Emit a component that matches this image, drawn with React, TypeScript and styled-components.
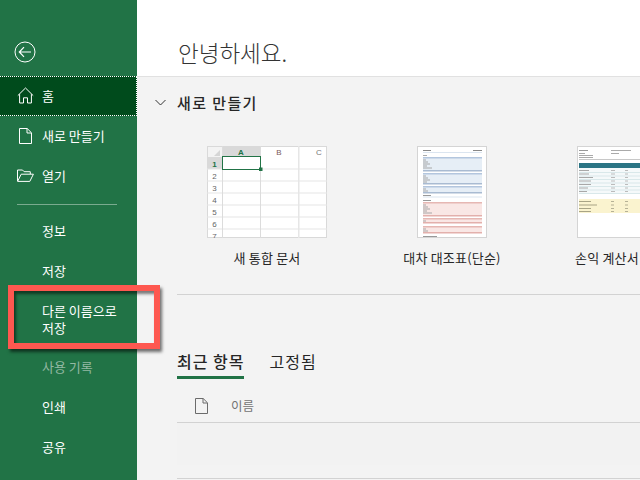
import React from "react";
import styled, { createGlobalStyle } from "styled-components";

const Global = createGlobalStyle`
  html, body { margin: 0; padding: 0; width: 640px; height: 480px; overflow: hidden; background: #f3f3f3; }
  body { font-family: "Noto Sans CJK KR", "Noto Sans", sans-serif; }
`;

const Page = styled.div`
  position: relative;
  display: flex;
  width: 640px;
  height: 480px;
  overflow: hidden;
`;

const Sidebar = styled.nav`
  flex: 0 0 137px;
  display: flex;
  flex-direction: column;
  background: #217346;
  color: #fff;
`;

const BackArea = styled.div`
  height: 76px;
  display: flex;
  align-items: flex-end;
  padding: 0 0 13px 14px;
  box-sizing: border-box;
`;

const NavItem = styled.div<{ $active?: boolean; $muted?: boolean }>`
  height: 40px;
  flex: none;
  box-sizing: border-box;
  display: flex;
  align-items: center;
  padding-bottom: 1px;
  font-size: 13px;
  color: ${(p) => (p.$muted ? "#93b8a3" : "#fff")};
  background: ${(p) => (p.$active ? "#004b1c" : "transparent")};
  border-style: dotted;
  border-color: #fff;
  border-width: ${(p) => (p.$active ? "1px 1px 1px 0" : "0")};
  white-space: nowrap;
`;

const IconSlot = styled.span`
  flex: 0 0 42px;
  display: flex;
  justify-content: center;
  padding-left: 8px;
  box-sizing: border-box;
`;

const TextItem = styled(NavItem)`
  padding-left: 42px;
`;

const TallItem = styled.div`
  height: 56px;
  flex: none;
  box-sizing: border-box;
  padding: 11px 0 0 42px;
  font-size: 13px;
  line-height: 17px;
  color: #fff;
  white-space: pre-line;
`;

const NavDivider = styled.hr`
  flex: none;
  width: 100px;
  margin: 8px 0 6px 17px;
  border: 0;
  height: 1px;
  background: #7aab8f;
`;

const Main = styled.main`
  flex: 1;
  display: flex;
  flex-direction: column;
  min-width: 0;
`;

const Header = styled.header`
  height: 77px;
  flex: none;
  box-sizing: border-box;
  background: #fff;
  border-bottom: 1px solid #e1e1e1;
  padding: 35px 0 0 41px;
  font-size: 22.5px;
  line-height: 34px;
  font-weight: 300;
  color: #333;
`;

const Body = styled.div`
  flex: 1;
  padding-left: 40px;
  background: #f3f3f3;
`;

const SectionTitle = styled.div`
  height: 51px;
  display: flex;
  align-items: center;
  margin-left: -22px;
  gap: 11px;
  font-size: 15px;
  letter-spacing: 1.4px;
  font-weight: 500;
  color: #262626;
`;

const Tiles = styled.div`
  display: flex;
  gap: 5px;
  margin-top: 18px;
  height: 148px;
  border-bottom: 1px solid #d2d2d2;
`;

const Tile = styled.div<{ $w: number }>`
  flex: 0 0 ${(p) => p.$w}px;
  display: flex;
  flex-direction: column;
  align-items: center;
`;

const Thumb = styled.div<{ $w: number; $offset?: number }>`
  width: ${(p) => p.$w}px;
  height: 92px;
  flex: none;
  margin-left: ${(p) => p.$offset || 0}px;
  line-height: 0;
`;

const TileLabel = styled.div`
  margin-top: 11px;
  font-size: 13px;
  letter-spacing: 0.2px;
  line-height: 18px;
  color: #262626;
  white-space: nowrap;
`;

const Tabs = styled.div`
  display: flex;
  gap: 25px;
  margin-top: 54px;
  height: 30px;
`;

const Tab = styled.div<{ $active?: boolean }>`
  box-sizing: border-box;
  height: 30px;
  font-size: 16px;
  letter-spacing: 1px;
  line-height: 24px;
  color: #262626;
  font-weight: ${(p) => (p.$active ? 500 : 400)};
  border-bottom: ${(p) => (p.$active ? "3px solid #217346" : "none")};
`;

const ColumnHeader = styled.div`
  display: flex;
  align-items: center;
  height: 44px;
  padding: 10px 0 0 18px;
  gap: 23px;
  box-sizing: border-box;
  border-bottom: 1px solid #d2d2d2;
  font-size: 12.5px;
  color: #737373;
`;

const EmptyRow = styled.div`
  height: 56px;
  box-sizing: border-box;
  border-bottom: 1px solid #d2d2d2;
`;

const EmptyFill = styled.div`
  height: 42px;
  background: #f2f2f2;
`;

const Callout = styled.div`
  position: absolute;
  left: 8px;
  top: 285px;
  width: 152px;
  height: 64px;
  box-sizing: border-box;
  border: 6px solid #fe5850;
  box-shadow: 2px 3px 3px rgba(0, 0, 0, 0.55), inset 2px 3px 3px rgba(0, 0, 0, 0.5);
`;

const Back = () => (
  <svg width="22" height="22" viewBox="0 0 22 22" fill="none" stroke="#fff" strokeWidth="1">
    <circle cx="11" cy="11" r="10" />
    <path d="M17 11H5.5M10 6.2 5.3 11l4.7 4.8" strokeWidth="1.2" />
  </svg>
);

const Home = () => (
  <svg width="17" height="17" viewBox="0 0 17 17" fill="none" stroke="#fff" strokeWidth="1">
    <path d="M.8 8.6 8.5 1l7.7 7.6M2.6 7.2v8.8h3.9v-5.2h4v5.2h3.9V7.2" />
  </svg>
);

const DocIcon = ({ color }: { color: string }) => (
  <svg width="13" height="16" viewBox="0 0 13 16" fill="none" stroke={color} strokeWidth="1">
    <path d="M.5.5h7.7l4.3 4.3v10.7H.5zM8 .7v4.3h4.4" />
  </svg>
);

const Folder = () => (
  <svg width="17" height="13" viewBox="0 0 17 13" fill="none" stroke="#fff" strokeWidth="1">
    <path d="M.5 12V1h5l1.6 1.7h6.2v2.4M.6 12.4h12.2l3.6-7.2H4.2z" />
  </svg>
);

const Chevron = () => (
  <svg width="11" height="7" viewBox="0 0 11 7" fill="none" stroke="#333" strokeWidth="1">
    <path d="M.5 1 5.5 6l5-5" />
  </svg>
);

const SheetThumb = () => {
  const rows = [1, 2, 3, 4, 5, 6, 7];
  return (
    <svg width="120" height="92" viewBox="0 0 120 92" fontFamily="Liberation Sans, sans-serif" fontSize="8">
      <rect x="0.5" y="0.5" width="119" height="91" fill="#fff" stroke="#d9d9d9" />
      <rect x="1" y="1" width="14" height="10" fill="#f3f3f3" />
      <path d="M7 10 13 4v6z" fill="#d5d5d5" />
      <rect x="15" y="0" width="38" height="11" fill="#d9d9d9" />
      <rect x="0" y="11" width="15" height="12" fill="#d9d9d9" />
      {rows.map((r) => (
        <rect key={r} x="0" y={10.5 + r * 12} width="120" height="1" fill="#e6e6e6" />
      ))}
      <rect x="15" y="0" width="1" height="92" fill="#dcdcdc" />
      <rect x="53" y="0" width="1" height="92" fill="#dcdcdc" />
      <rect x="91" y="0" width="1.5" height="92" fill="#e6e6e6" />
      <rect x="15.5" y="10.5" width="38" height="13" fill="#fff" stroke="#217346" strokeWidth="1" />
      <rect x="52" y="21.5" width="3.5" height="3.5" fill="#217346" />
      <text x="34" y="8.5" textAnchor="middle" fill="#217346" fontWeight="700">A</text>
      <text x="72" y="8.5" textAnchor="middle" fill="#7a5a5a">B</text>
      <text x="112" y="8.5" textAnchor="middle" fill="#777">C</text>
      {rows.map((r) => (
        <text key={r} x="7.5" y={8.5 + r * 12} textAnchor="middle" fill={r === 1 ? "#217346" : "#666"} fontWeight={r === 1 ? 700 : 400}>
          {r}
        </text>
      ))}
    </svg>
  );
};

type Block = { top: number; fillEnd: number; end: number; head: string; fill: string; foot: string };

const blocks: Block[] = [
  { top: 11, fillEnd: 24, end: 25, head: "#b3c6de", fill: "#e6eef6", foot: "#a9bbd2" },
  { top: 27, fillEnd: 37, end: 38, head: "#b3c6de", fill: "#e6eef6", foot: "#a9bbd2" },
  { top: 40, fillEnd: 46, end: 47, head: "#b3c6de", fill: "#e6eef6", foot: "#a9bbd2" },
  { top: 56, fillEnd: 69, end: 70, head: "#e6b7b3", fill: "#f9e7e5", foot: "#e3b0ac" },
  { top: 72, fillEnd: 76, end: 77, head: "#e6b7b3", fill: "#f9e7e5", foot: "#e3b0ac" },
  { top: 80, fillEnd: 86, end: 87, head: "#e6b7b3", fill: "#f9e7e5", foot: "#e3b0ac" },
];

const BudgetThumb = () => (
  <svg width="70" height="92" viewBox="0 0 70 92">
    <rect x="0.5" y="0.5" width="69" height="91" fill="#fff" stroke="#d4d4d4" />
    <rect x="6" y="4" width="8" height="1" fill="#888" />
    <rect x="56" y="4" width="9" height="1" fill="#888" />
    <rect x="6" y="6" width="59" height="1" fill="#dbe5f0" />
    <rect x="6" y="9" width="4" height="1" fill="#aaa" />
    {blocks.map((b) => (
      <g key={b.top}>
        <rect x="6" y={b.top} width="59" height={b.fillEnd - b.top} fill={b.fill} />
        <rect x="6" y={b.top} width="59" height="1.5" fill={b.head} />
        <rect x="6" y={b.fillEnd} width="59" height={b.end - b.fillEnd + 0.5} fill={b.foot} />
        {Array.from({ length: Math.floor((b.fillEnd - b.top - 2) / 2) }, (_, i) => (
          <rect key={i} x="6" y={b.top + 2.5 + i * 2} width={[3, 5, 7, 4, 9, 6][i % 6]} height="1" fill="#a8a8a8" />
        ))}
      </g>
    ))}
    <rect x="6" y="49" width="8" height="1" fill="#999" />
    <rect x="6" y="50.5" width="59" height="1" fill="#dbe5f0" />
    <rect x="6" y="54" width="8" height="1" fill="#999" />
    <rect x="6" y="90" width="14" height="1" fill="#999" />
  </svg>
);

const incomeRows = [24, 27.5, 31, 34.5, 38, 41.5, 45];
const yellowRows = [55, 58.5, 62, 65];

const IncomeThumb = () => (
  <svg width="70" height="92" viewBox="0 0 70 92">
    <rect x="0.5" y="0.5" width="69" height="91" fill="#fff" stroke="#d4d4d4" />
    <rect x="2" y="4" width="9" height="1" fill="#999" />
    <rect x="2" y="7" width="6" height="1" fill="#aaa" />
    <rect x="2" y="9" width="14" height="1" fill="#aaa" />
    <rect x="2" y="11" width="14" height="1" fill="#aaa" />
    <rect x="34" y="4" width="20" height="1" fill="#aaa" />
    <rect x="34" y="7" width="8" height="1" fill="#aaa" />
    <rect x="2" y="13" width="66" height="1" fill="#c8c8c8" />
    <rect x="2" y="17" width="68" height="5" fill="#2a7484" />
    <rect x="2" y="22" width="68" height="26" fill="#f5f9fa" />
    {incomeRows.map((y, i) => (
      <g key={y}>
        <rect x="2" y={y} width={[10, 10, 14, 12, 12, 9, 8][i]} height="1" fill="#a8a8a8" />
        <rect x="34" y={y} width="4" height="1" fill="#bbb" />
        <rect x="48" y={y} width="3" height="1" fill="#bbb" />
        <rect x="2" y={y + 2} width="68" height="1" fill="#d9e8ea" />
      </g>
    ))}
    <rect x="2" y="53" width="68" height="14" fill="#faf3cf" />
    {yellowRows.map((y, i) => (
      <g key={y}>
        <rect x="2" y={y} width={[12, 18, 12, 12][i]} height="1" fill="#a8a486" />
        <rect x="34" y={y} width="3" height="1" fill="#b5b196" />
        <rect x="48" y={y} width="3" height="1" fill="#b5b196" />
      </g>
    ))}
  </svg>
);

export default function App() {
  return (
    <Page>
      <Global />
      <Sidebar>
        <BackArea><Back /></BackArea>
        <NavItem $active><IconSlot><Home /></IconSlot>홈</NavItem>
        <NavItem><IconSlot><DocIcon color="#fff" /></IconSlot>새로 만들기</NavItem>
        <NavItem><IconSlot><Folder /></IconSlot>열기</NavItem>
        <NavDivider />
        <TextItem>정보</TextItem>
        <TextItem>저장</TextItem>
        <TallItem>{"다른 이름으로\n저장"}</TallItem>
        <TextItem $muted>사용 기록</TextItem>
        <TextItem>인쇄</TextItem>
        <TextItem>공유</TextItem>
      </Sidebar>
      <Main>
        <Header>안녕하세요.</Header>
        <Body>
          <SectionTitle><Chevron />새로 만들기</SectionTitle>
          <Tiles>
            <Tile $w={180}><Thumb $w={120}><SheetThumb /></Thumb><TileLabel>새 통합 문서</TileLabel></Tile>
            <Tile $w={180}><Thumb $w={70}><BudgetThumb /></Thumb><TileLabel>대차 대조표(단순)</TileLabel></Tile>
            <Tile $w={120}><Thumb $w={70} $offset={9}><IncomeThumb /></Thumb><TileLabel>손익 계산서</TileLabel></Tile>
          </Tiles>
          <Tabs>
            <Tab $active>최근 항목</Tab>
            <Tab>고정됨</Tab>
          </Tabs>
          <ColumnHeader><DocIcon color="#6b6b6b" />이름</ColumnHeader>
          <EmptyRow><EmptyFill /></EmptyRow>
        </Body>
      </Main>
      <Callout />
    </Page>
  );
}
